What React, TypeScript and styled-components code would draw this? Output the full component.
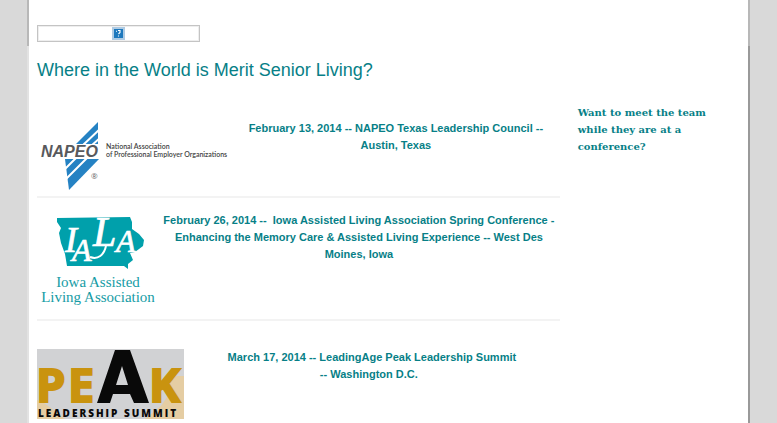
import React from "react";
import styled, { createGlobalStyle } from "styled-components";

const teal = "#077f87";

const GlobalStyle = createGlobalStyle`
  * { box-sizing: border-box; }
  body {
    margin: 0;
    background: #d9d9d9;
    color: ${teal};
    font-family: "Liberation Sans", Arial, sans-serif;
  }
`;

const Page = styled.div`
  display: grid;
  grid-template-rows: 46px auto;
  min-height: 100vh;
  padding: 0 27px;
  overflow: hidden;
`;

const Banner = styled.header`
  padding: 25px 8px 0;
  background: #fff;
  border-left: 2px solid #b8b8b8;
  border-right: 2px solid #b8b8b8;
`;

const MissingImage = styled.div`
  display: flex;
  align-items: center;
  justify-content: center;
  width: 163px;
  height: 17px;
  border: 1px solid #c4c4c4;
  outline: 1px solid #eeeeee;
  outline-offset: -2px;
`;

const Content = styled.div`
  padding: 10px 8px 0;
  background: #fff;
  border-left: 2px solid #e2e2e2;
  border-right: 2px solid #999;
`;

const Title = styled.h1`
  margin: 0 0 24px;
  font-size: 18px;
  line-height: 28px;
  font-weight: 400;
`;

const Columns = styled.div`
  display: grid;
  grid-template-columns: minmax(0, 522fr) minmax(0, 162fr);
  column-gap: 18px;
`;

const Event = styled.article<{ $top: number; $bottom: number }>`
  display: flex;
  align-items: flex-start;
  padding: ${(p) => p.$top}px 0 ${(p) => p.$bottom}px;
  border-bottom: 2px solid #f3f3f3;
`;

const EventLogo = styled.svg`
  flex: none;
  display: block;
`;

const EventTitle = styled.h2<{ $top?: number }>`
  flex: 1;
  margin: ${(p) => p.$top ?? 0}px 0 0;
  font-size: 11px;
  line-height: 17px;
  font-weight: 700;
  text-align: center;
`;

const Aside = styled.aside`
  font-family: "DejaVu Serif", serif;
  font-size: 10px;
  line-height: 17px;
  font-weight: 700;
`;

const AsideText = styled.p`
  max-width: 145px;
  margin: -4px 0 0;
`;

const HelpIcon = () => (
  <svg width="13" height="13" viewBox="0 0 13 13" aria-label="Missing image">
    <rect width="13" height="13" fill="#afcbe3" />
    <rect x="2" y="2" width="9" height="9" fill="#1d78bd" />
    <path d="M4 4.200h1M6 3.500h2v2L6.500 7M6.500 8.500v1" fill="none" stroke="#fff" strokeWidth="1.1" />
  </svg>
);

const NapeoLogo = () => (
  <EventLogo width="195" height="76" viewBox="0 0 195 76" role="img" aria-label="NAPEO">
    <path d="M61 4V26H39Z" fill="#2582c3" />
    <path d="M28 41H62L32 72Z" fill="#2582c3" />
    <path d="M45 28L64 10M54 28L64 19M40 39L27 52M51 39L28 62" stroke="#fff" strokeWidth="2" />
    <g fontFamily="Lato, sans-serif" fontSize="7" fontWeight="600" fill="#444">
      <text x="69" y="31">National Association</text>
      <text x="69" y="39">of Professional Employer Organizations</text>
    </g>
    <text x="4" y="39" fill="#58595c" stroke="#fff" strokeWidth="2" paintOrder="stroke" fontFamily="Liberation Sans, sans-serif" fontSize="16" fontWeight="700" fontStyle="italic">NAPEO</text>
    <text x="54" y="61" fill="#666" fontFamily="Open Sans, sans-serif" fontSize="8">®</text>
  </EventLogo>
);

const IowaLogo = () => (
  <EventLogo width="121" height="98" viewBox="0 0 121 98" role="img" aria-label="Iowa Assisted Living Association">
    <path d="M20 6L93 5L95 10L95 17L102 22L107 28L106 34L98 40L93 41L96 48L91 52V57L87 54L30 54L28 42L24 31L22 21L24 16L20 10Z" fill="#00a0ab" />
    <g fill="#fff" stroke="#fff" strokeWidth="0.700" fontFamily="Liberation Serif, serif" fontStyle="italic">
      <text x="28" y="40" fontSize="36">I</text>
      <text x="35" y="49" fontSize="32">A</text>
      <text x="56" y="34" fontSize="42">L</text>
      <text x="79" y="40" fontSize="32">A</text>
    </g>
    <path d="M53 45C61 48 67 43 69 34" fill="none" stroke="#fff" strokeWidth="2" />
    <g fill="#169ca5" fontFamily="Liberation Serif, serif" fontSize="15">
      <text x="61" y="75" textAnchor="middle">Iowa Assisted</text>
      <text x="61" y="90" textAnchor="middle">Living Association</text>
    </g>
  </EventLogo>
);

const PeakLogo = () => (
  <EventLogo width="147" height="70" viewBox="0 0 147 70" role="img" aria-label="Peak Leadership Summit">
    <rect width="147" height="70" fill="#d1d2d4" />
    <path d="M0 51L7 54L18 62L28 70H0ZM108 70L124 57L130 48L133 32L140 27H147V70Z" fill="#e5cda3" />
    <g fill="#c9930f" stroke="#c9930f" strokeWidth="2" fontFamily="Open Sans, sans-serif" fontWeight="700" fontSize="47">
      <text x="-1" y="53">P</text>
      <text x="31" y="53">E</text>
      <text x="112" y="53">K</text>
    </g>
    <path d="M60 54L78 1H93L112 54H97L93 45H76L73 54ZM79 36H91L85 17Z" fill="#090909" fillRule="evenodd" />
    <text x="1" y="68" fill="#090909" fontFamily="Open Sans, sans-serif" fontWeight="800" fontSize="10" letterSpacing="2">LEADERSHIP SUMMIT</text>
  </EventLogo>
);

export default function App() {
  return (
    <>
      <GlobalStyle />
      <Page>
        <Banner>
          <MissingImage><HelpIcon /></MissingImage>
        </Banner>
        <Content>
          <Title>Where in the World is Merit Senior Living?</Title>
          <Columns>
            <main>
              <Event $top={10} $bottom={2}>
                <NapeoLogo />
                <EventTitle $top={2}>
                  February 13, 2014 -- NAPEO Texas Leadership Council --<br />Austin, Texas
                </EventTitle>
              </Event>
              <Event $top={14} $bottom={9}>
                <IowaLogo />
                <EventTitle>
                  February 26, 2014 --&nbsp; Iowa Assisted Living Association Spring Conference -<br />
                  Enhancing the Memory Care &amp; Assisted Living Experience -- West Des<br />
                  Moines, Iowa
                </EventTitle>
              </Event>
              <Event $top={28} $bottom={5}>
                <PeakLogo />
                <EventTitle>
                  March 17, 2014 -- LeadingAge Peak Leadership Summit<br />-- Washington D.C.&nbsp;&nbsp;
                </EventTitle>
              </Event>
            </main>
            <Aside>
              <AsideText>Want to meet the team while they are at a conference?</AsideText>
            </Aside>
          </Columns>
        </Content>
      </Page>
    </>
  );
}
